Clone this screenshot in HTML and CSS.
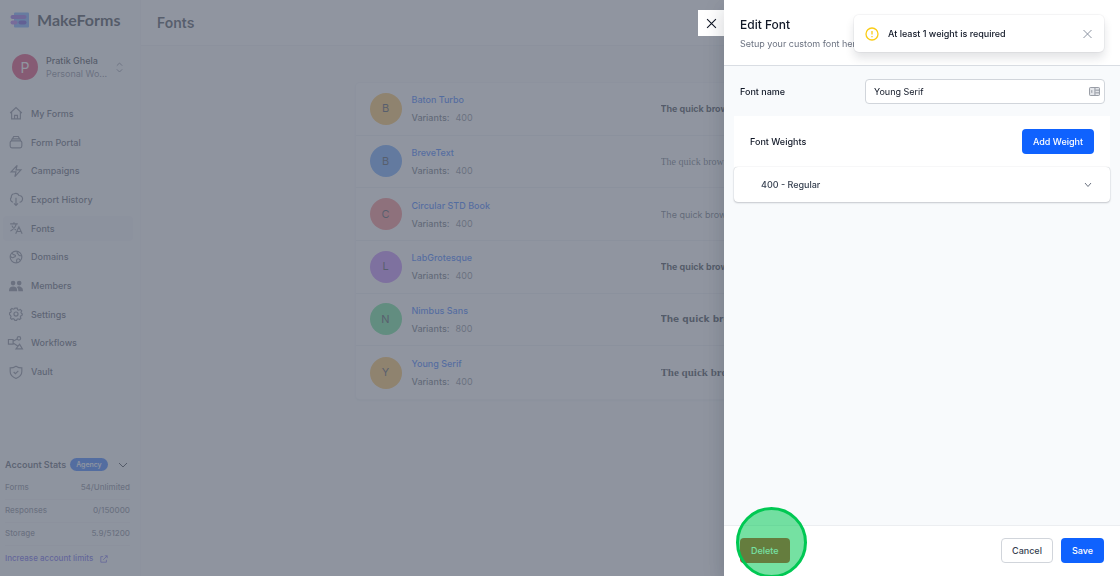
FILE: index.html
```
<!DOCTYPE html>
<html lang="en">
<head>
<meta charset="utf-8">
<title>MakeForms - Fonts</title>
<link rel="stylesheet" href="styles.css">
</head>
<body>
<div class="app">
  <aside class="sidebar">
    <div class="brand">
      <svg class="brand-mark" viewBox="0 0 20 16" aria-hidden="true">
        <rect x="4" y="0.5" width="15" height="15" rx="1" fill="#5b9bff"/>
        <rect x="0.500" y="3" width="16" height="4" rx="2" fill="#7c4ce0"/>
        <rect x="0.500" y="8.500" width="7" height="4" rx="2" fill="#a05be8"/>
        <rect x="8.500" y="8.500" width="8" height="4" rx="2" fill="#4a2fd0"/>
      </svg>
      <span class="brand-name">MakeForms</span>
    </div>
    <button class="account" type="button">
      <span class="account-avatar">P</span>
      <span class="account-text"><span class="account-name">Pratik Ghela</span><span class="account-space">Personal Wo...</span></span>
      <svg class="account-arrows" viewBox="0 0 10 12" aria-hidden="true"><path d="M2 4l3-3 3 3M2 8l3 3 3-3"/></svg>
    </button>
    <nav class="nav">
      <a class="nav-item" href="#"><svg class="icon" viewBox="0 0 24 24"><path d="M2 12L12 2.500 22 12M4.500 10v12h15V10M9.500 22v-6h5v6"/></svg>My Forms</a>
      <a class="nav-item" href="#"><svg class="icon" viewBox="0 0 24 24"><path d="M2 13a3 3 0 013-3h14a3 3 0 013 3v6a3 3 0 01-3 3H5a3 3 0 01-3-3zM4 10l1.500-3.500h13L20 10M6 6.500L8 2.500h8l2 4"/></svg>Form Portal</a>
      <a class="nav-item" href="#"><svg class="icon" viewBox="0 0 24 24"><path d="M3.500 13.500L14 2.500 12 10h8.500L10 21.500 12 13.500z"/></svg>Campaigns</a>
      <a class="nav-item" href="#"><svg class="icon" viewBox="0 0 24 24"><path d="M7 17.500a5 5 0 01-3-8.500 5 5 0 015-6 6 6 0 018 3 5.500 5.500 0 011 11.500M12 10v13M8.500 19.500L12 23l3.500-3.500"/></svg>Export History</a>
      <a class="nav-item nav-item-active" href="#" aria-current="page"><svg class="icon" viewBox="0 0 24 24"><path d="M2 5h13M8.500 2v3M12.500 5C11 11 7 15 2.500 17M5 8c1.500 4 4 6 7 7.500M11.500 22l5.500-12 5.500 12M13.500 18h7"/></svg>Fonts</a>
      <a class="nav-item" href="#"><svg class="icon" viewBox="0 0 24 24"><circle cx="12" cy="12" r="10"/><path d="M5 5c1 3 3 3 5 3.500s1 3-1 3.500-2 2-4 1-2-2-3-2M15 2.500c-1 2-2 3 0 4s1 3 3 3 2 1 3.500 0M20 18c-2-1-2-3-4-3s-3 1-3 3 1 2 0 4"/></svg>Domains</a>
      <a class="nav-item" href="#"><svg class="icon icon-solid" viewBox="0 0 24 24"><circle cx="7" cy="7" r="4"/><circle cx="17.500" cy="7" r="4"/><path d="M0 20a7 7 0 0114 0v1H0zM16 21v-1a9 9 0 00-2.500-6.500A7 7 0 0124 20v1z"/></svg>Members</a>
      <a class="nav-item" href="#"><svg class="icon" viewBox="0 0 24 24"><path d="M10 2h4l.8 2.700 2 .8 2.500-1.300 2.500 2.500L20.500 9.200l.8 1.800L23 12l-1 2.500-2 .8-.6 1.500 1 2.500-2.300 2.200-2.600-1.200-1.500.7L13 23h-3l-1-2.200-2-.8-2.500 1.200-2-2.200 1-2.600-.8-1.600L1 13v-3l2-1 .8-1.800L2.600 4.700 5 2.500l2.500 1.300 1.700-.7z"/><circle cx="12" cy="12" r="3.500"/></svg>Settings</a>
      <a class="nav-item" href="#"><svg class="icon" viewBox="0 0 24 24"><path d="M-1 6h8v8h-8zM7 9l7-4M7 12l8 5M18 14l5 8H12z"/><circle cx="17" cy="4" r="3"/></svg>Workflows</a>
      <a class="nav-item" href="#"><svg class="icon" viewBox="0 0 24 24"><path d="M12 2c3 2 6 3 10 3v6c0 6-4 9.500-10 12C6 20.500 2 17 2 11V5c4 0 7-1 10-3zM8 12l3 3 5-5"/></svg>Vault</a>
    </nav>
    <section class="stats">
      <div class="stats-head"><h2 class="stats-title">Account Stats</h2><span class="plan">Agency</span>
        <svg class="stats-chevron" viewBox="0 0 10 6" aria-hidden="true"><path d="M1 1l4 4 4-4"/></svg></div>
      <dl class="stats-list">
        <div class="stat"><dt>Forms</dt><dd>54/Unlimited</dd></div>
        <div class="stat"><dt>Responses</dt><dd>0/150000</dd></div>
        <div class="stat"><dt>Storage</dt><dd>5.9/51200</dd></div>
      </dl>
      <a class="limits" href="#">Increase account limits
        <svg class="limits-icon" viewBox="0 0 10 10" aria-hidden="true"><path d="M4 2H1v7h7V6M6 1h3v3M9 1L4 6"/></svg></a>
    </section>
  </aside>
  <main class="main">
    <header class="topbar"><h1 class="page-title">Fonts</h1></header>
    <ul class="fonts">
      <li class="font-row"><span class="font-avatar amber">B</span><div class="font-info"><a class="font-name" href="#">Baton Turbo</a><p class="variants"><b>Variants:</b><span>400</span></p></div><p class="sample sample-bold">The quick brown fox jumps</p></li>
      <li class="font-row"><span class="font-avatar blue">B</span><div class="font-info"><a class="font-name" href="#">BreveText</a><p class="variants"><b>Variants:</b><span>400</span></p></div><p class="sample sample-serif">The quick brown fox jumps</p></li>
      <li class="font-row"><span class="font-avatar red">C</span><div class="font-info"><a class="font-name" href="#">Circular STD Book</a><p class="variants"><b>Variants:</b><span>400</span></p></div><p class="sample">The quick brown fox jumps</p></li>
      <li class="font-row"><span class="font-avatar purple">L</span><div class="font-info"><a class="font-name" href="#">LabGrotesque</a><p class="variants"><b>Variants:</b><span>400</span></p></div><p class="sample sample-bold">The quick brown fox jumps</p></li>
      <li class="font-row"><span class="font-avatar green">N</span><div class="font-info"><a class="font-name" href="#">Nimbus Sans</a><p class="variants"><b>Variants:</b><span>800</span></p></div><p class="sample sample-wide">The quick brown fox jumps</p></li>
      <li class="font-row"><span class="font-avatar amber">Y</span><div class="font-info"><a class="font-name" href="#">Young Serif</a><p class="variants"><b>Variants:</b><span>400</span></p></div><p class="sample sample-serif sample-strong">The quick brown fox jumps</p></li>
    </ul>
  </main>
</div>

<div class="overlay">
  <button class="drawer-close" type="button" aria-label="Close panel"><svg viewBox="0 0 10 10"><path d="M1 1l8 8M9 1L1 9"/></svg></button>
  <section class="drawer" role="dialog" aria-labelledby="drawer-title">
    <header class="drawer-head">
      <h2 class="drawer-title" id="drawer-title">Edit Font</h2>
      <p class="drawer-sub">Setup your custom font here</p>
    </header>
    <div class="drawer-body">
      <div class="field">
        <label for="font-name">Font name</label>
        <div class="input-wrap">
          <input id="font-name" type="text" value="Young Serif">
          <svg class="input-icon" viewBox="0 0 12 10" aria-hidden="true"><rect x="0.500" y="0.500" width="11" height="9" rx="1" fill="#e5e7eb" stroke="#8a8f99"/><path d="M6.500 1v8M7 3.500h4M7 6.500h4M3 3.500v3" stroke="#8a8f99"/></svg>
        </div>
      </div>
      <div class="weights">
        <div class="weights-head"><h3 class="weights-title">Font Weights</h3><button class="btn btn-primary" type="button">Add Weight</button></div>
        <button class="weight" type="button" aria-expanded="false">400 - Regular<svg class="weight-chevron" viewBox="0 0 8 6"><path d="M1 1l3 3.500L7 1"/></svg></button>
      </div>
    </div>
    <footer class="drawer-foot">
      <div class="delete-wrap"><button class="btn btn-danger" type="button">Delete</button><span class="click-marker"></span></div>
      <button class="btn btn-plain" type="button">Cancel</button>
      <button class="btn btn-primary" type="button">Save</button>
    </footer>
  </section>
</div>

<div class="toast" role="alert">
  <svg class="toast-icon" viewBox="0 0 14 14" aria-hidden="true"><circle cx="7" cy="7" r="6"/><path d="M7 4v3.500M7 9v1.300"/></svg>
  <p class="toast-text">At least 1 weight is required</p>
  <button class="toast-close" type="button" aria-label="Dismiss"><svg viewBox="0 0 10 10"><path d="M1 1l8 8M9 1L1 9"/></svg></button>
</div>
</body>
</html>
```
FILE: styles.css
```
* { box-sizing: border-box; }
body, h1, h2, h3, p, ul, dl, dd { margin: 0; padding: 0; }
body { height: 100vh; overflow: hidden; font: 9px/13px Inter, "Liberation Sans", sans-serif; color: #111827; }
button, input { font: inherit; color: inherit; }
button { border: 0; padding: 0; background: none; }
a { text-decoration: none; color: inherit; }
svg { display: block; flex: none; fill: none; stroke: currentColor; }

.app { display: flex; height: 100vh; background: #f9fafb; }
.sidebar { display: flex; flex-direction: column; width: 141px; flex: none; border-right: 1px solid #f1f3f6; background: #f8fafc; }
.brand { display: flex; align-items: center; gap: 7px; padding: 10px 10px 0; }
.brand-mark { width: 20px; height: 16px; stroke: none; }
.brand-name { font: 700 16px/19px Lato, sans-serif; }
.account { display: flex; align-items: center; gap: 8px; margin: 25px 20px 0 12px; text-align: left; }
.account-avatar { display: grid; place-items: center; width: 26px; height: 26px; flex: none; border-radius: 50%; background: #d81b4f; color: #fff; font-size: 14px; }
.account-text { display: grid; flex: 1; white-space: nowrap; }
.account-name { font-weight: 500; }
.account-space { color: #6b7280; }
.account-arrows { width: 9px; height: 11px; color: #6b7280; }
.nav { display: grid; grid-auto-rows: 1fr; row-gap: 4px; height: 283px; margin: 21px 7px 0 3px; }
.nav-item { display: flex; align-items: center; gap: 8px; padding-left: 6px; border-radius: 4px; color: #374151; font-weight: 500; }
.nav-item-active { background: #eef1f5; }
.icon { width: 14px; height: 14px; stroke-width: 2; color: #6b7280; overflow: visible; }
.icon-solid { fill: currentColor; stroke: none; }
.stats { margin-top: auto; padding: 0 10px 11px 5px; }
.stats-head { display: flex; align-items: center; gap: 4px; white-space: nowrap; }
.stats-title { font-size: 9px; font-weight: 600; line-height: 15px; color: #374151; }
.plan { padding: 0 6px; border-radius: 7px; background: #0f62fe; color: #fff; font-size: 7px; font-weight: 500; }
.stats-chevron { width: 10px; height: 6px; margin-left: auto; margin-right: 2px; }
.stats-list { margin-top: 5px; }
.stat { display: flex; justify-content: space-between; padding: 4px 0 5px; border-bottom: 1px solid #eef0f4; color: #6b7280; font-size: 8px; font-weight: 500; }
.limits { display: flex; align-items: center; gap: 7px; margin-top: 6px; color: #4f46e5; font-size: 8px; font-weight: 500; }
.limits-icon { width: 8px; height: 8px; }

.main { flex: 1; min-width: 0; }
.topbar { padding: 13px 16px; border-bottom: 1px solid #eef0f4; background: #fff; }
.page-title { font-size: 14px; font-weight: 600; line-height: 19px; color: #1f2937; }
.fonts { display: grid; grid-auto-rows: 1fr; height: 316px; max-width: 550px; margin: 37px auto 0; list-style: none; background: #fff; border-radius: 4px; box-shadow: 0 0 0 1px #f1f3f6, 0 1px 2px #d5d8de; }
.font-row { display: grid; grid-template-columns: 32px 1fr 231px; gap: 10px; align-items: center; padding: 0 14px; border-bottom: 1px solid #eceef2; }
.font-row:last-child { border-bottom: 0; }
.font-avatar { display: grid; place-items: center; height: 32px; border-radius: 50%; font-size: 11px; color: #1f2937; }
.amber { background: #fbb63c; }
.blue { background: #4b93fa; }
.red { background: #f87171; }
.purple { background: #b870fb; }
.green { background: #4ade80; }
.font-info { display: grid; gap: 5px; }
.font-name { color: #0f62fe; font-weight: 500; }
.variants { display: flex; gap: 6px; color: #6b7280; }
.variants b { color: #4b5563; font-weight: 500; }
.sample { overflow: hidden; color: #4b5563; white-space: nowrap; }
.sample-bold { color: #111827; font-weight: 700; }
.sample-serif { font-family: "Liberation Serif", serif; font-size: 10px; }
.sample-strong { color: #111827; font-weight: 700; font-size: 11px; }
.sample-wide { color: #111827; font-family: "DejaVu Sans", sans-serif; font-weight: 700; }

.overlay { position: fixed; inset: 0; display: flex; justify-content: flex-end; align-items: flex-start; background: rgba(107, 114, 128, .75); }
.drawer-close { display: grid; place-items: center; width: 26px; height: 26px; margin-top: 10px; background: #fff; }
.drawer-close svg { width: 11px; height: 11px; }
.drawer { display: flex; flex-direction: column; width: 396px; height: 100%; background: #f8fafc; box-shadow: 0 8px 20px rgba(17, 24, 39, .2); }
.drawer-head { padding: 17px 16px 15px; border-bottom: 1px solid #d9dde3; background: #fff; }
.drawer-title { font-size: 12px; font-weight: 500; line-height: 16px; }
.drawer-sub { margin-top: 4px; color: #6b7280; }
.drawer-body { flex: 1; }
.field { display: grid; grid-template-columns: 1fr 240px; align-items: center; padding: 13px 15px 12px 16px; font-weight: 500; }
.input-wrap { position: relative; }
.input-wrap input { display: block; width: 100%; height: 25px; padding: 0 24px 0 8px; border: 1px solid #d1d5db; border-radius: 4px; background: #fff; font-weight: 400; }
.input-icon { position: absolute; right: 5px; top: 8px; width: 11px; height: 9px; }
.weights { margin: 0 10px; }
.weights-head { display: flex; align-items: center; justify-content: space-between; padding: 13px 16px; background: #fff; }
.weights-title { font-size: 9px; font-weight: 500; }
.weight { display: flex; align-items: center; justify-content: space-between; width: 100%; padding: 11px 18px 11px 27px; border-radius: 4px; background: #fff; box-shadow: 0 0 1px rgba(17, 24, 39, .25), 0 1px 2px rgba(17, 24, 39, .2); color: #374151; font-weight: 500; }
.weight-chevron { width: 8px; height: 6px; color: #6b7280; }
.drawer-foot { display: flex; gap: 8px; padding: 12px 16px 13px; border-top: 1px solid #eceef1; background: #fff; }
.btn { height: 25px; padding: 0 11px; border-radius: 4px; font-weight: 500; }
.btn-primary { background: #0f62fe; color: #fff; }
.btn-plain { padding: 0 10px; border: 1px solid #d1d5db; background: #fff; color: #374151; }
.btn-danger { background: #dc2626; color: #fff; }
.delete-wrap { position: relative; margin-right: auto; }
.click-marker { position: absolute; left: -4px; top: -31px; width: 71px; height: 71px; border: 3px solid #00c853; border-radius: 50%; background: rgba(0, 200, 83, .54); }

.toast { position: fixed; top: 15px; right: 16px; display: flex; align-items: center; gap: 9px; width: 250px; padding: 11px; border-radius: 5px; background: #fff; box-shadow: 0 0 0 1px rgba(17, 24, 39, .04), 0 6px 10px rgba(17, 24, 39, .12); }
.toast-icon { width: 14px; height: 14px; color: #facc15; stroke-width: 1.3; }
.toast-text { flex: 1; line-height: 15px; font-weight: 500; }
.toast-close { color: #8b93a1; }
.toast-close svg { width: 11px; height: 10px; }
```
